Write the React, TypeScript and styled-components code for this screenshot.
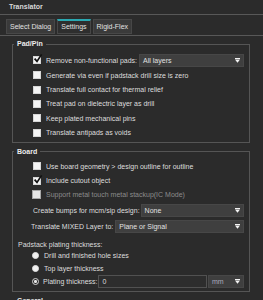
import React from 'react';
import styled, { createGlobalStyle } from 'styled-components';

const GlobalStyle = createGlobalStyle`
  html, body {
    margin: 0;
    padding: 0;
    background: #2b2b2b;
  }
  body {
    font-family: 'Liberation Sans', Arial, sans-serif;
    font-size: 7px;
    color: #dcdcdc;
    overflow: hidden;
  }
  * {
    box-sizing: border-box;
  }
`;

/* panel + header */
const Panel = styled.div`
  width: 263px;
  height: 300px;
  overflow: hidden;
  background: #2b2b2b;
`;

const Header = styled.div`
  height: 15px;
  padding: 3px 0 0 9px;
  line-height: 8px;
  font-weight: bold;
  color: #d8d8d8;
  border-bottom: 1px solid #585858;
`;

/* tabs */
const TabBar = styled.div`
  display: flex;
  align-items: flex-start;
  gap: 2px;
  height: 21px;
  padding: 4px 0 0 6px;
  border-bottom: 1px solid #585858;
`;

const Tab = styled.div<{ $active?: boolean }>`
  height: 15px;
  padding: 0 3px;
  line-height: ${(p) => (p.$active ? '12px' : '13px')};
  color: #e2e2e2;
  background: ${(p) => (p.$active ? '#2e2e2e' : '#3a3a3a')};
  border: 1px solid #474747;
  border-top: ${(p) => (p.$active ? '2px solid #2aa9b2' : '1px solid #474747')};
`;

/* group boxes */
const Content = styled.div`
  padding: 4px 13px 0 12px;
`;

const Group = styled.fieldset`
  margin: 0 0 5px;
  padding: 0 5px 0 0;
  min-width: 0;
  border: 1px solid #555;
`;

const Legend = styled.legend`
  margin-left: 1px;
  padding: 0 3px;
  line-height: 8px;
  font-weight: bold;
  color: #ececec;
`;

const Rows = styled.div<{ $top: number; $bottom: number }>`
  padding-top: ${(p) => p.$top}px;
  padding-bottom: ${(p) => p.$bottom}px;
`;

const Row = styled.div<{ $h: number; $indent: number; $gap?: number }>`
  display: flex;
  align-items: center;
  height: ${(p) => p.$h}px;
  padding-left: ${(p) => p.$indent}px;
  gap: ${(p) => p.$gap ?? 2}px;
  white-space: nowrap;
`;

const Text = styled.span<{ $dim?: boolean }>`
  color: ${(p) => (p.$dim ? '#8c8c8c' : '#dedede')};
`;

const SubLabel = styled.div`
  height: 9px;
  margin-top: 6px;
  padding-left: 5px;
  line-height: 9px;
`;

/* check box */
const Box = styled.span<{ $dim?: boolean }>`
  position: relative;
  flex-shrink: 0;
  width: ${(p) => (p.$dim ? 9 : 8)}px;
  height: ${(p) => (p.$dim ? 9 : 8)}px;
  margin-right: 3px;
  background: ${(p) => (p.$dim ? '#e6e6e6' : '#f4f4f4')};
  border: 1px solid ${(p) => (p.$dim ? '#a8a8a8' : '#d6d6d6')};

  svg {
    position: absolute;
    left: 0;
    top: -3px;
    overflow: visible;
  }
`;

const CheckBox = ({ checked, dim }: { checked?: boolean; dim?: boolean }) => (
  <Box $dim={dim}>
    {checked && (
      <svg width="8" height="9" viewBox="0 0 8 9">
        <path d="M0.6 4.6 L3 7.4 L7.6 0.4" fill="none" stroke="#111" strokeWidth="1.7" />
      </svg>
    )}
  </Box>
);

/* radio */
const Radio = styled.span<{ $on?: boolean }>`
  position: relative;
  flex-shrink: 0;
  width: 7px;
  height: 7px;
  margin-right: 3px;
  border-radius: 50%;
  background: ${(p) => (p.$on ? '#2b2b2b' : '#f2f2f2')};
  border: ${(p) => (p.$on ? '1.4px solid #d4d4d4' : '1px solid #e2e2e2')};

  &::after {
    content: '';
    display: ${(p) => (p.$on ? 'block' : 'none')};
    position: absolute;
    left: 50%;
    top: 50%;
    width: 2.4px;
    height: 2.4px;
    margin: -1.2px 0 0 -1.2px;
    border-radius: 50%;
    background: #e8e8e8;
  }
`;

/* dropdown + input */
const SelectBox = styled.div<{ $w?: number; $muted?: boolean }>`
  display: flex;
  align-items: center;
  justify-content: space-between;
  flex: ${(p) => (p.$w ? `0 0 ${p.$w}px` : '1')};
  height: 13px;
  padding: 0 3px;
  background: #3f3f3f;
  border: 1px solid #474747;
  color: ${(p) => (p.$muted ? '#a9a9bd' : '#e2e2e2')};
`;

const Arrow = () => (
  <svg width="5" height="5" viewBox="0 0 5 5">
    <rect x="0" y="0" width="5" height="1" fill="#f4f4f4" />
    <polygon points="0,1.6 5,1.6 2.5,4.8" fill="#f4f4f4" />
  </svg>
);

const Select = ({ value, w, muted }: { value: string; w?: number; muted?: boolean }) => (
  <SelectBox $w={w} $muted={muted}>
    <span>{value}</span>
    <Arrow />
  </SelectBox>
);

const NumInput = styled.div`
  flex: 1;
  height: 13px;
  padding-left: 3px;
  line-height: 11px;
  background: #2d2d2d;
  border: 1px solid #515151;
  color: #dedede;
`;

const padPinChecks = [
  'Generate via even if padstack drill size is zero',
  'Translate full contact for thermal relief',
  'Treat pad on dielectric layer as drill',
  'Keep plated mechanical pins',
  'Translate antipads as voids',
];

export default function App() {
  return (
    <Panel>
      <GlobalStyle />
      <Header>Translator</Header>
      <TabBar>
        <Tab>Select Dialog</Tab>
        <Tab $active>Settings</Tab>
        <Tab>Rigid-Flex</Tab>
      </TabBar>

      <Content>
        <Group>
          <Legend>Pad/Pin</Legend>
          <Rows $top={4} $bottom={2}>
            <Row $h={16} $indent={20}>
              <CheckBox checked />
              <Text>Remove non-functional pads:</Text>
              <Select value="All layers" />
            </Row>
            {padPinChecks.map((t) => (
              <Row key={t} $h={14.4} $indent={20}>
                <CheckBox />
                <Text>{t}</Text>
              </Row>
            ))}
          </Rows>
        </Group>

        <Group>
          <Legend>Board</Legend>
          <Rows $top={3} $bottom={3}>
            <Row $h={14.4} $indent={20}>
              <CheckBox />
              <Text>Use board geometry &gt; design outline for outline</Text>
            </Row>
            <Row $h={14.4} $indent={20}>
              <CheckBox checked />
              <Text>Include cutout object</Text>
            </Row>
            <Row $h={14.4} $indent={19}>
              <CheckBox dim />
              <Text $dim>Support metal touch metal stackup(IC Mode)</Text>
            </Row>
            <Row $h={16} $indent={20} $gap={1}>
              <Text>Create bumps for mcm/sip design:</Text>
              <Select value="None" />
            </Row>
            <Row $h={16} $indent={18}>
              <Text>Translate MIXED Layer to:</Text>
              <Select value="Plane or Signal" />
            </Row>
            <SubLabel>Padstack plating thickness:</SubLabel>
            <Row $h={13} $indent={19}>
              <Radio />
              <Text>Drill and finished hole sizes</Text>
            </Row>
            <Row $h={13} $indent={19}>
              <Radio />
              <Text>Top layer thickness</Text>
            </Row>
            <Row $h={13} $indent={19} $gap={1}>
              <Radio $on />
              <Text>Plating thickness:</Text>
              <NumInput>0</NumInput>
              <Select value="mm" w={36} muted />
            </Row>
          </Rows>
        </Group>

        <Group>
          <Legend>General</Legend>
        </Group>
      </Content>
    </Panel>
  );
}
